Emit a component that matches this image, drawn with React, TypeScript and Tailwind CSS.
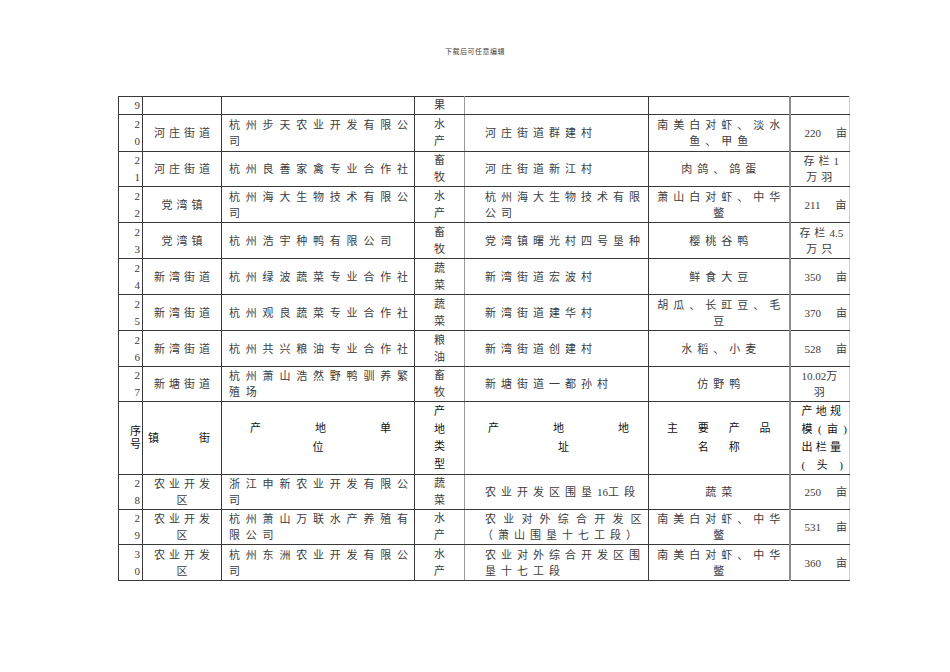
import type { ReactNode } from "react";

type Row = {
  seq: string[];
  town: string[];
  company: string[];
  kind: string[];
  address: string[];
  addressClass?: string;
  product: string[];
  area?: string;
  scale?: string[];
  h: string;
};

const ROWS_TOP: Row[] = [
  { seq: ["9"], town: [], company: [], kind: ["果"], address: [], product: [], scale: [], h: "h-[17px]" },
  {
    seq: ["2", "0"],
    town: ["河庄街道"],
    company: ["杭州步天农业开发有限公", "司"],
    kind: ["水", "产"],
    address: ["河庄街道群建村"],
    product: ["南美白对虾、淡水", "鱼、甲鱼"],
    area: "220",
    h: "h-[37px]",
  },
  {
    seq: ["2", "1"],
    town: ["河庄街道"],
    company: ["杭州良善家禽专业合作社"],
    kind: ["畜", "牧"],
    address: ["河庄街道新江村"],
    product: ["肉鸽、鸽蛋"],
    scale: ["存栏1", "万羽"],
    h: "h-[35px]",
  },
  {
    seq: ["2", "2"],
    town: ["党湾镇"],
    company: ["杭州海大生物技术有限公", "司"],
    kind: ["水", "产"],
    address: ["杭州海大生物技术有限", "公司"],
    product: ["萧山白对虾、中华", "鳖"],
    area: "211",
    h: "h-[36px]",
  },
  {
    seq: ["2", "3"],
    town: ["党湾镇"],
    company: ["杭州浩宇种鸭有限公司"],
    kind: ["畜", "牧"],
    address: ["党湾镇曙光村四号垦种"],
    product: ["樱桃谷鸭"],
    scale: ["存栏4.5", "万只"],
    h: "h-[36px]",
  },
  {
    seq: ["2", "4"],
    town: ["新湾街道"],
    company: ["杭州绿波蔬菜专业合作社"],
    kind: ["蔬", "菜"],
    address: ["新湾街道宏波村"],
    product: ["鲜食大豆"],
    area: "350",
    h: "h-[36px]",
  },
  {
    seq: ["2", "5"],
    town: ["新湾街道"],
    company: ["杭州观良蔬菜专业合作社"],
    kind: ["蔬", "菜"],
    address: ["新湾街道建华村"],
    product: ["胡瓜、长豇豆、毛", "豆"],
    area: "370",
    h: "h-[36px]",
  },
  {
    seq: ["2", "6"],
    town: ["新湾街道"],
    company: ["杭州共兴粮油专业合作社"],
    kind: ["粮", "油"],
    address: ["新湾街道创建村"],
    product: ["水稻、小麦"],
    area: "528",
    h: "h-[36px]",
  },
  {
    seq: ["2", "7"],
    town: ["新塘街道"],
    company: ["杭州萧山浩然野鸭驯养繁", "殖场"],
    kind: ["畜", "牧"],
    address: ["新塘街道一都孙村"],
    product: ["仿野鸭"],
    scale: ["10.02万", "羽"],
    h: "h-[34px]",
  },
];

const ROWS_BOTTOM: Row[] = [
  {
    seq: ["2", "8"],
    town: ["农业开发", "区"],
    company: ["浙江申新农业开发有限公", "司"],
    kind: ["蔬", "菜"],
    address: ["农业开发区围垦16工段"],
    product: ["蔬菜"],
    area: "250",
    h: "h-[35px]",
  },
  {
    seq: ["2", "9"],
    town: ["农业开发", "区"],
    company: ["杭州萧山万联水产养殖有", "限公司"],
    kind: ["水", "产"],
    address: ["农业对外综合开发区", "（萧山围垦十七工段）"],
    addressClass: "first:tracking-[7.2px] -ml-[3px] first:ml-0",
    product: ["南美白对虾、中华", "鳖"],
    area: "531",
    h: "h-[35px]",
  },
  {
    seq: ["3", "0"],
    town: ["农业开发", "区"],
    company: ["杭州东洲农业开发有限公", "司"],
    kind: ["水", "产"],
    address: ["农业对外综合开发区围", "垦十七工段"],
    product: ["南美白对虾、中华", "鳖"],
    area: "360",
    h: "h-[36px]",
  },
];

const cell = "border border-[#3a3a3a] p-0 align-middle";

// digits and latin keep their natural spacing; only the CJK runs get the tracking
function Spaced({ text }: { text: string }) {
  const parts = text.match(/[0-9.]+|[^0-9.]+/g) ?? [];
  return (
    <>
      {parts.map((p, i) =>
        /^[0-9.]+$/.test(p) ? (
          <span key={i} className="tracking-normal">
            {p}
          </span>
        ) : (
          <span key={i}>{p}</span>
        ),
      )}
    </>
  );
}

function Lines({ lines, className = "" }: { lines: string[]; className?: string }) {
  return (
    <>
      {lines.map((t, i) => (
        <div key={i} className={`whitespace-nowrap leading-[16px] ${className}`}>
          <Spaced text={t} />
        </div>
      ))}
    </>
  );
}

function DataRow({ row }: { row: Row }) {
  return (
    <tr className={row.h}>
      <td className={`${cell} pr-[2px] text-right`}>
        <Lines lines={row.seq} className="leading-[17px]" />
      </td>
      <td className={`${cell} text-center`}>
        <Lines lines={row.town} className="tracking-[4px] pl-[4px]" />
      </td>
      <td className={`${cell} pl-[7px] text-left`}>
        <Lines lines={row.company} className="tracking-[5.8px]" />
      </td>
      <td className={`${cell} border-r-[#9a9a9a] text-center`}>
        <Lines lines={row.kind} className="leading-[17px]" />
      </td>
      <td className={`${cell} pl-[20px] text-left`}>
        <Lines lines={row.address} className={`tracking-[5px] ${row.addressClass ?? ""}`} />
      </td>
      <td className={`${cell} border-r-2 border-r-[#8c8c8c] text-center`}>
        <Lines lines={row.product} className="tracking-[5px] pl-[5px]" />
      </td>
      <td className={`${cell} border-r-[#d0d0d0]`}>
        {row.area ? (
          <div className="flex items-center pl-[14px] leading-[16px]">
            <span>{row.area}</span>
            <span className="ml-[15px]">亩</span>
          </div>
        ) : (
          <Lines lines={row.scale ?? []} className="text-center tracking-[4px] pl-[3px]" />
        )}
      </td>
    </tr>
  );
}

function Spread({ chars, className = "" }: { chars: string[]; className?: string }) {
  return (
    <div className={`flex justify-between ${className}`}>
      {chars.map((c, i) => (
        <span key={i}>{c}</span>
      ))}
    </div>
  );
}

function HeaderRow() {
  const h: ReactNode = null;
  return (
    <tr className="h-[70px] text-[#111]">
      <td className={`${cell} text-center`}>
        <div className="ml-[10px] leading-[13px]">
          <div>序</div>
          <div>号</div>
        </div>
      </td>
      <td className={cell}>
        <Spread chars={["镇", "街"]} className="pl-[5px] pr-[11px]" />
      </td>
      <td className={cell}>
        <Spread chars={["产", "地", "单"]} className="pl-[28px] pr-[23px] leading-[19px]" />
        <div className="text-center leading-[19px]">位</div>
      </td>
      <td className={`${cell} border-r-[#9a9a9a] text-center`}>
        <div className="leading-[17.5px]">
          <div>产</div>
          <div>地</div>
          <div>类</div>
          <div>型</div>
        </div>
      </td>
      <td className={cell}>
        <Spread chars={["产", "地", "地"]} className="pl-[23px] pr-[19px] leading-[19px]" />
        <div className="pl-[93px] leading-[19px]">址</div>
      </td>
      <td className={`${cell} border-r-2 border-r-[#8c8c8c]`}>
        <Spread chars={["主", "要", "产", "品"]} className="pl-[18px] pr-[18px] leading-[19px]" />
        <div className="flex justify-center gap-[20px] leading-[19px]">
          <span>名</span>
          <span>称</span>
        </div>
      </td>
      <td className={`${cell} border-r-[#d0d0d0]`}>
        <div className="pl-[11px] pr-[2px] leading-[18px]">
          <Spread chars={["产", "地", "规"]} className="pr-[6px]" />
          <Spread chars={["模", "(", "亩", ")"]} />
          <Spread chars={["出", "栏", "量"]} className="pr-[6px]" />
          <Spread chars={["(", "头", ")"]} className="pr-[4px]" />
        </div>
        {h}
      </td>
    </tr>
  );
}

export default function App() {
  return (
    <div className="min-h-[672px] w-[950px] bg-white font-['Liberation_Serif','Noto_Sans_CJK_SC',serif] text-[#3c3c3c]">
      <div className="pt-[47px] text-center text-[7px] leading-[10px] tracking-[0.5px] text-[#444]">
        下载后可任意编辑
      </div>
      <div className="mt-[39px] pl-[118px]">
        <table className="w-[731px] table-fixed border-collapse text-[11px]">
          <colgroup>
            <col className="w-[24px]" />
            <col className="w-[79px]" />
            <col className="w-[193px]" />
            <col className="w-[50px]" />
            <col className="w-[184px]" />
            <col className="w-[141px]" />
            <col className="w-[60px]" />
          </colgroup>
          <tbody>
            {ROWS_TOP.map((row, i) => (
              <DataRow key={`t${i}`} row={row} />
            ))}
            <HeaderRow />
            {ROWS_BOTTOM.map((row, i) => (
              <DataRow key={`b${i}`} row={row} />
            ))}
          </tbody>
        </table>
      </div>
    </div>
  );
}
